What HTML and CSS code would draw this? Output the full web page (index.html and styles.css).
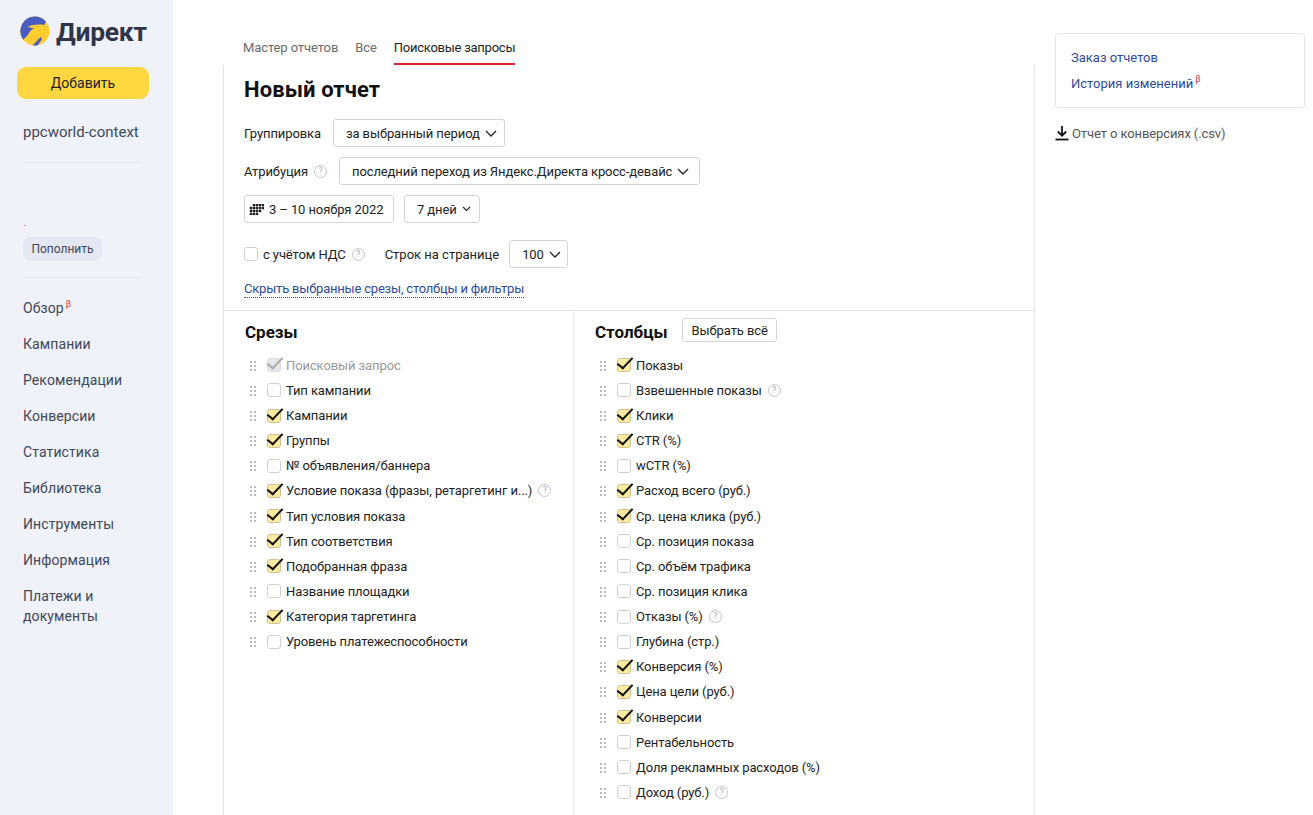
FILE: index.html
```html
<!DOCTYPE html>
<html lang="ru">
<head>
    <meta charset="UTF-8">
    <meta name="viewport" content="width=device-width, initial-scale=1.0">
    <title>Директ — Новый отчет</title>
    <link rel="stylesheet" href="styles.css">
</head>
<body>
    <aside class="sidebar">
        <div class="logo">
            <svg class="logo-icon" width="30" height="30" viewBox="0 0 32 32">
                <circle cx="16" cy="16" r="15.5" fill="#ffce2e"/>
                <path d="M16 .5A15.5 15.5 0 0 0 3.500 25.200L9 19.500C10.500 16 12 14 15.500 13.500L8 11.500C13 9 20 8.500 26 9.500L27.500 5.500A15.500 15.500 0 0 0 16 .5Z" fill="#4a5cc0"/>
                <path d="M13.500 31.300L22 22.500L23.500 24.500L19 31.200A15.500 15.500 0 0 1 13.500 31.300Z" fill="#4a5cc0"/>
            </svg>
            <span class="logo-text">Директ</span>
        </div>
        <button class="add-btn">Добавить</button>
        <div class="account">ppcworld-context</div>
        <div class="balance">
            <span class="balance-dot"></span>
            <button class="topup-btn">Пополнить</button>
        </div>
        <nav class="nav">
            <a>Обзор<sup class="beta">β</sup></a>
            <a>Кампании</a>
            <a>Рекомендации</a>
            <a>Конверсии</a>
            <a>Статистика</a>
            <a>Библиотека</a>
            <a>Инструменты</a>
            <a>Информация</a>
            <a>Платежи и<br>документы</a>
        </nav>
    </aside>

    <main class="content">
        <div class="tabs">
            <a class="tab">Мастер отчетов</a>
            <a class="tab">Все</a>
            <a class="tab active">Поисковые запросы</a>
        </div>
        <section class="report">
            <div class="settings">
                <h1>Новый отчет</h1>
                <div class="row">
                    <span>Группировка</span>
                    <button class="select group-select">за выбранный период <svg class="chev" width="12" height="7" viewBox="0 0 12 7"><path d="M1 1l5 5 5-5" fill="none" stroke="#222" stroke-width="1.300"/></svg></button>
                </div>
                <div class="row">
                    <span>Атрибуция</span>
                    <span class="help"></span>
                    <button class="select attr-select">последний переход из Яндекс.Директа кросс-девайс <svg class="chev" width="12" height="7" viewBox="0 0 12 7"><path d="M1 1l5 5 5-5" fill="none" stroke="#222" stroke-width="1.300"/></svg></button>
                </div>
                <div class="row">
                    <button class="select date-select">
                        <svg width="15" height="11" viewBox="0 0 15 11" fill="#222" stroke="#222" stroke-width=".5"><path d="M4 0h2v2H4zM7 0h2v2H7zM10 0h2v2h-2zM13 0h2v2h-2zM1 3h2v2H1zM4 3h2v2H4zM7 3h2v2H7zM10 3h2v2h-2zM13 3h2v2h-2zM1 6h2v2H1zM4 6h2v2H4zM7 6h2v2H7zM10 6h2v2h-2zM1 9h2v2H1zM4 9h2v2H4zM7 9h2v2H7z"/></svg>
                        3 – 10 ноября 2022
                    </button>
                    <button class="select days-select">7 дней <svg class="chev" width="9" height="6" viewBox="0 0 9 6"><path d="M1 1l3.500 3.500L8 1" fill="none" stroke="#222" stroke-width="1.200"/></svg></button>
                </div>
                <div class="row vat-row">
                    <span class="check"></span>
                    <span>с учётом НДС</span>
                    <span class="help"></span>
                    <span class="per-page">Строк на странице</span>
                    <button class="select pages-select">100 <svg class="chev" width="12" height="7" viewBox="0 0 12 7"><path d="M1 1l5 5 5-5" fill="none" stroke="#222" stroke-width="1.300"/></svg></button>
                </div>
                <a class="toggle-link">Скрыть выбранные срезы, столбцы и фильтры</a>
            </div>

            <div class="columns">
                <div class="col col-left">
                    <div class="col-head"><h2>Срезы</h2></div>
                    <ul class="items">
                        <li class="disabled"><span class="grip"></span><span class="check on"></span>Поисковый запрос</li>
                        <li><span class="grip"></span><span class="check"></span>Тип кампании</li>
                        <li><span class="grip"></span><span class="check on"></span>Кампании</li>
                        <li><span class="grip"></span><span class="check on"></span>Группы</li>
                        <li><span class="grip"></span><span class="check"></span>№ объявления/баннера</li>
                        <li><span class="grip"></span><span class="check on"></span>Условие показа (фразы, ретаргетинг и...)<span class="help"></span></li>
                        <li><span class="grip"></span><span class="check on"></span>Тип условия показа</li>
                        <li><span class="grip"></span><span class="check on"></span>Тип соответствия</li>
                        <li><span class="grip"></span><span class="check on"></span>Подобранная фраза</li>
                        <li><span class="grip"></span><span class="check"></span>Название площадки</li>
                        <li><span class="grip"></span><span class="check on"></span>Категория таргетинга</li>
                        <li><span class="grip"></span><span class="check"></span>Уровень платежеспособности</li>
                    </ul>
                </div>
                <div class="col">
                    <div class="col-head"><h2>Столбцы</h2><button class="select all-btn">Выбрать всё</button></div>
                    <ul class="items">
                        <li><span class="grip"></span><span class="check on"></span>Показы</li>
                        <li><span class="grip"></span><span class="check"></span>Взвешенные показы<span class="help"></span></li>
                        <li><span class="grip"></span><span class="check on"></span>Клики</li>
                        <li><span class="grip"></span><span class="check on"></span>CTR (%)</li>
                        <li><span class="grip"></span><span class="check"></span>wCTR (%)</li>
                        <li><span class="grip"></span><span class="check on"></span>Расход всего (руб.)</li>
                        <li><span class="grip"></span><span class="check on"></span>Ср. цена клика (руб.)</li>
                        <li><span class="grip"></span><span class="check"></span>Ср. позиция показа</li>
                        <li><span class="grip"></span><span class="check"></span>Ср. объём трафика</li>
                        <li><span class="grip"></span><span class="check"></span>Ср. позиция клика</li>
                        <li><span class="grip"></span><span class="check"></span>Отказы (%)<span class="help"></span></li>
                        <li><span class="grip"></span><span class="check"></span>Глубина (стр.)</li>
                        <li><span class="grip"></span><span class="check on"></span>Конверсия (%)</li>
                        <li><span class="grip"></span><span class="check on"></span>Цена цели (руб.)</li>
                        <li><span class="grip"></span><span class="check on"></span>Конверсии</li>
                        <li><span class="grip"></span><span class="check"></span>Рентабельность</li>
                        <li><span class="grip"></span><span class="check"></span>Доля рекламных расходов (%)</li>
                        <li><span class="grip"></span><span class="check"></span>Доход (руб.)<span class="help"></span></li>
                    </ul>
                </div>
            </div>
        </section>
    </main>

    <aside class="side-right">
        <div class="links-box">
            <a>Заказ отчетов</a>
            <a>История изменений<sup class="beta">β</sup></a>
        </div>
        <a class="download">
            <svg width="14" height="16" viewBox="0 0 14 16"><path d="M7 1v9M2.800 6.500L7 10.700l4.200-4.200" fill="none" stroke="#111" stroke-width="1.800"/><path d="M.5 14.500h13" stroke="#111" stroke-width="1.800"/></svg>
            Отчет о конверсиях (.csv)
        </a>
    </aside>
</body>
</html>
```
FILE: styles.css
```css
body {
    font-family: Roboto, Arial, sans-serif;
    font-size: 13px;
    letter-spacing: -0.1px;
    margin: 0;
    padding: 0;
    display: flex;
    height: 815px;
    overflow: hidden;
    background-color: #fff;
    color: #222;
}
button {
    font: inherit;
    letter-spacing: inherit;
    color: inherit;
}
a {
    color: inherit;
}
ul {
    list-style: none;
    margin: 0;
    padding: 0;
}

/* левая колонка */
.sidebar {
    width: 173px;
    flex: none;
    box-sizing: border-box;
    padding: 16px 0 0 23px;
    background-color: #eff2f9;
    color: #41485a;
    letter-spacing: 0;
}
.logo {
    display: flex;
    align-items: center;
    gap: 6px;
    margin-left: -3px;
    height: 32px;
}
.logo-icon {
    margin-top: -2px;
}
.logo-text {
    font-size: 26.5px;
    font-weight: 700;
    line-height: 32px;
    letter-spacing: -0.3px;
    color: #2f3447;
}
.add-btn {
    display: block;
    width: 132px;
    height: 32px;
    margin: 19px 0 0 -6px;
    border: none;
    border-radius: 9px;
    background-color: #ffd740;
    color: #222;
    font-size: 14px;
}
.account {
    margin-top: 24px;
    width: 116px;
    padding-bottom: 21px;
    font-size: 15px;
    line-height: 18px;
    white-space: nowrap;
    border-bottom: 1px solid #e4e8f1;
}
.balance {
    height: 115px;
    width: 116px;
    box-sizing: border-box;
    padding-top: 74px;
    border-bottom: 1px solid #e4e8f1;
    position: relative;
}
.balance-dot {
    position: absolute;
    left: 1px;
    top: 62px;
    width: 2px;
    height: 1px;
    background-color: #e88;
}
.topup-btn {
    display: block;
    width: 79px;
    height: 24px;
    padding: 0;
    border: none;
    border-radius: 8px;
    background-color: #e3e8f2;
    color: #41485a;
    font-size: 12px;
}
.nav {
    margin-top: 12px;
    font-size: 14px;
    line-height: 20px;
    letter-spacing: 0.1px;
}
.nav a {
    display: block;
    padding: 8px 0;
}
.beta {
    color: #e0313a;
    font-size: 9px;
    line-height: 0;
    margin-left: 2px;
    vertical-align: 6px;
}

/* центр */
.content {
    width: 812px;
    flex: none;
    margin-left: 50px;
}
.tabs {
    display: flex;
    gap: 17px;
    height: 65px;
    box-sizing: border-box;
    padding: 38px 0 0 20px;
}
.tab {
    line-height: 19px;
    color: #6b6b6b;
}
.tab.active {
    color: #222;
    letter-spacing: -0.25px;
    border-bottom: 2px solid #d9232e;
    box-sizing: border-box;
    height: 27px;
}
.report {
    border-left: 1px solid #e5e5e5;
    border-right: 1px solid #e5e5e5;
    height: 750px;
}
.settings {
    height: 246px;
    box-sizing: border-box;
    padding: 9px 0 0 20px;
    border-bottom: 1px solid #e5e5e5;
}
h1 {
    margin: 0;
    font-size: 22px;
    line-height: 32px;
    font-weight: 700;
    letter-spacing: 0.1px;
    color: #111;
}
.row {
    display: flex;
    align-items: center;
    height: 28px;
    margin-top: 10px;
}
.settings h1 + .row {
    margin-top: 13px;
}
.vat-row {
    margin-top: 17px;
}
.select {
    display: inline-flex;
    align-items: center;
    justify-content: flex-start;
    height: 28px;
    box-sizing: border-box;
    padding: 0 0 0 12px;
    background-color: #fff;
    border: 1px solid #d5d5d5;
    border-radius: 3px;
    white-space: nowrap;
}
.chev {
    margin-left: 5px;
}
.group-select {
    width: 172px;
    margin-left: 12px;
}
.attr-select {
    width: 361px;
    margin-left: 12px;
}
.date-select {
    width: 150px;
    gap: 5px;
    padding-left: 4px;
}
.days-select {
    width: 76px;
    margin-left: 10px;
}
.pages-select {
    width: 59px;
    margin-left: 10px;
}
.per-page {
    margin-left: 20px;
    letter-spacing: 0;
}
.toggle-link {
    display: inline-block;
    margin-top: 12px;
    line-height: 17px;
    letter-spacing: -0.2px;
    color: #2d4a9c;
    border-bottom: 1px dotted #2d4a9c;
}
.help {
    display: inline-block;
    box-sizing: border-box;
    width: 13px;
    height: 13px;
    margin-left: 6px;
    border: 1px solid #c4c4c4;
    border-radius: 50%;
    color: #b0b0b0;
    font-size: 9px;
    line-height: 11px;
    text-align: center;
}
.help::before {
    content: "?";
}
.check {
    display: inline-block;
    flex: none;
    position: relative;
    box-sizing: border-box;
    width: 14px;
    height: 14px;
    margin-right: 5px;
    background-color: #fff;
    border: 1px solid #d0d0d0;
    border-radius: 3px;
}
.check.on {
    background-color: #ffeba0;
    border-color: #cfc290;
}
.check.on::after {
    content: "";
    position: absolute;
    left: 3px;
    top: -5px;
    width: 6px;
    height: 13px;
    border-right: 2px solid #111;
    border-bottom: 2px solid #111;
    transform: rotate(38deg) skewX(-6deg);
}

/* срезы и столбцы */
.columns {
    display: flex;
}
.col {
    flex: 1;
    padding-left: 21px;
}
.col-left {
    flex: none;
    width: 350px;
    box-sizing: border-box;
    padding-left: 21px;
    border-right: 1px solid #e5e5e5;
    height: 505px;
}
.col-head {
    display: flex;
    align-items: center;
    gap: 14px;
    height: 41.7px;
}
h2 {
    margin: 0;
    font-size: 17px;
    font-weight: 700;
    letter-spacing: 0;
    color: #111;
}
.all-btn {
    width: 95px;
    height: 24px;
    padding-left: 9px;
    margin-top: -3px;
}
.items li {
    display: flex;
    align-items: center;
    height: 25.13px;
    white-space: nowrap;
}
.grip {
    flex: none;
    width: 8px;
    height: 11px;
    margin: 0 10px 0 4px;
    background-image: radial-gradient(circle, #bbb 1.1px, transparent 1.2px);
    background-size: 4px 4px;
}
.disabled {
    color: #999;
}
.disabled .check.on {
    background-color: #e6e6e6;
    border-color: #ddd;
}
.disabled .check.on::after {
    border-color: #aaa;
}

/* правая колонка */
.side-right {
    width: 250px;
    flex: none;
    margin-left: 20px;
    padding-top: 33px;
}
.links-box {
    height: 75px;
    box-sizing: border-box;
    padding: 14px 15px;
    border: 1px solid #e5e5e5;
    border-radius: 3px;
    letter-spacing: 0;
    color: #2d4a9c;
}
.links-box a {
    display: block;
    line-height: 19px;
    margin-bottom: 7px;
}
.download {
    display: flex;
    align-items: center;
    gap: 3px;
    margin-top: 17px;
    color: #555;
}
```
